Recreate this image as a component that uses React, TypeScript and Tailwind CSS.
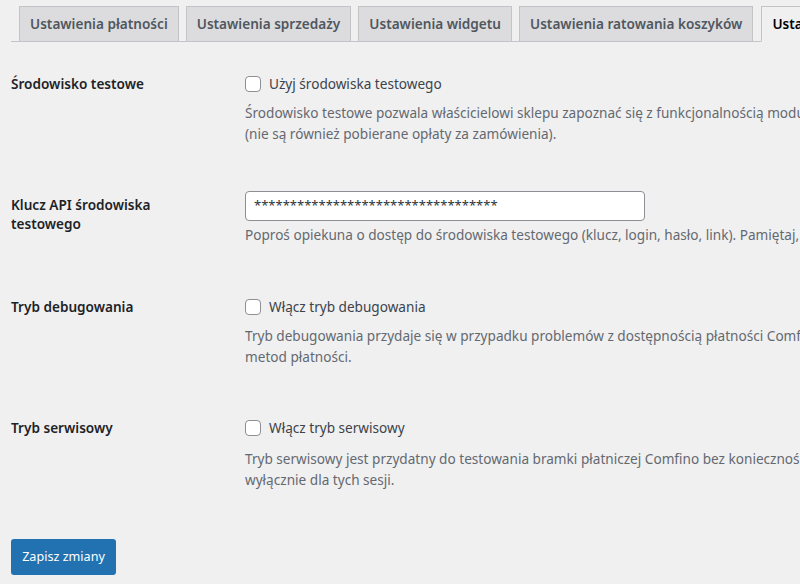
import React from "react";

const tabs = [
  { label: "Ustawienia płatności", active: false },
  { label: "Ustawienia sprzedaży", active: false },
  { label: "Ustawienia widgetu", active: false },
  { label: "Ustawienia ratowania koszyków", active: false },
  { label: "Ustawienia zaawansowane", active: true },
];

const font = { fontFamily: '"Noto Sans", "Open Sans", sans-serif' };

const Checkbox = ({ label }: { label: string }) => (
  <label className="flex items-center h-[22px] text-[13.6px] text-[#3c434a]">
    <span className="w-4 h-4 rounded-[4px] border border-[#8c8f94] bg-white shrink-0" />
    <span className="ml-2">{label}</span>
  </label>
);

const Description = ({ lines }: { lines: string[] }) => (
  <div className="text-[13.6px] leading-[21px] text-[#646970] whitespace-nowrap">
    {lines.map((l, i) => (
      <div key={i}>{l}</div>
    ))}
  </div>
);

export default function App() {
  return (
    <div
      className="w-[800px] h-[584px] overflow-hidden bg-[#f0f0f1] text-[#3c434a]"
      style={font}
    >
      {/* tabs */}
      <div className="ml-[11px] pt-[6px] border-b border-[#c3c4c7] flex whitespace-nowrap">
        {tabs.map((t) => (
          <div
            key={t.label}
            className={
              t.active
                ? "ml-[8px] -mb-px h-[36px] px-[10px] flex items-center border border-[#c3c4c7] border-b-[#f0f0f1] bg-[#f0f0f1] text-[13.6px] font-semibold text-black"
                : "ml-[7px] first:ml-[8px] -mb-px h-[36px] px-[10px] flex items-center border border-[#c3c4c7] bg-[#dcdcde] text-[13.6px] font-semibold text-[#50575e]"
            }
          >
            {t.label}
          </div>
        ))}
      </div>

      <div className="pl-[11px]">
        {/* row 1 */}
        <div className="flex mt-[31px]">
          <div className="w-[234px] shrink-0 text-[13.6px] leading-[22px] font-semibold text-[#1d2327]">
            Środowisko testowe
          </div>
          <div>
            <Checkbox label="Użyj środowiska testowego" />
            <div className="mt-[7px]">
              <Description
                lines={[
                  "Środowisko testowe pozwala właścicielowi sklepu zapoznać się z funkcjonalnością modułu Comfino bez ponoszenia kosztów",
                  "(nie są również pobierane opłaty za zamówienia).",
                ]}
              />
            </div>
          </div>
        </div>

        {/* row 2 */}
        <div className="flex mt-[47px]">
          <div className="w-[234px] shrink-0 pt-[4px] text-[13.6px] leading-[19px] font-semibold text-[#1d2327]">
            Klucz API środowiska
            <br />
            testowego
          </div>
          <div>
            <div className="w-[400px] h-[30px] rounded-[4px] border border-[#8c8f94] bg-white px-[8px] flex items-center text-[13px] text-[#2c3338]">
              **********************************
            </div>
            <div className="mt-[3px]">
              <Description
                lines={[
                  "Poproś opiekuna o dostęp do środowiska testowego (klucz, login, hasło, link). Pamiętaj, by przed uruchomieniem sklepu wyłączyć tryb testowy.",
                ]}
              />
            </div>
          </div>
        </div>

        {/* row 3 */}
        <div className="flex mt-[51px]">
          <div className="w-[234px] shrink-0 text-[13.6px] leading-[22px] font-semibold text-[#1d2327]">
            Tryb debugowania
          </div>
          <div>
            <Checkbox label="Włącz tryb debugowania" />
            <div className="mt-[7px]">
              <Description
                lines={[
                  "Tryb debugowania przydaje się w przypadku problemów z dostępnością płatności Comfino. W tym trybie moduł loguje szczegóły wewnętrznego procesu odpowiedzialnego za wyświetlanie",
                  "metod płatności.",
                ]}
              />
            </div>
          </div>
        </div>

        {/* row 4 */}
        <div className="flex mt-[50px]">
          <div className="w-[234px] shrink-0 text-[13.6px] leading-[22px] font-semibold text-[#1d2327]">
            Tryb serwisowy
          </div>
          <div>
            <Checkbox label="Włącz tryb serwisowy" />
            <div className="mt-[9px]">
              <Description
                lines={[
                  "Tryb serwisowy jest przydatny do testowania bramki płatniczej Comfino bez konieczności przełączania się na środowisko testowe. Płatność Comfino jest widoczna",
                  "wyłącznie dla tych sesji.",
                ]}
              />
            </div>
          </div>
        </div>

        <button className="mt-[49px] w-[105px] h-[36px] rounded-[3px] bg-[#2271b1] text-white text-[12.6px]">
          Zapisz zmiany
        </button>
      </div>
    </div>
  );
}
